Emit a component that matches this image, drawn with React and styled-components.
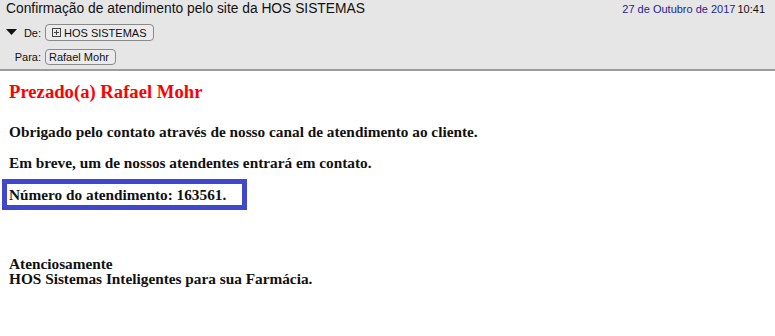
import React from 'react';
import styled, { createGlobalStyle } from 'styled-components';

const GlobalStyle = createGlobalStyle`
  html, body {
    margin: 0;
    padding: 0;
    background: #ffffff;
  }
`;

const Page = styled.div`
  width: 775px;
  height: 336px;
  overflow: hidden;
  background: #ffffff;
`;

const Header = styled.div`
  height: 69px;
  background-color: #e6e6e6;
  border-bottom: 2px solid #9c9c9c;
  font-family: 'Liberation Sans', Arial, sans-serif;
  color: #111;
`;

const TopRow = styled.div`
  display: flex;
  justify-content: space-between;
  align-items: baseline;
  padding: 1px 10px 0 6px;
  height: 20px;
`;

const Subject = styled.div`
  font-size: 13.8px;
`;

const DateLine = styled.div`
  font-size: 11px;
`;

const DateText = styled.span`
  color: #1f1f8f;
  margin-right: 2px;
`;

const FieldRow = styled.div`
  display: flex;
  align-items: center;
  height: 17px;
  margin-top: ${(p) => p.$top || 0}px;
`;

const LabelCell = styled.div`
  width: 45px;
  display: flex;
  align-items: center;
  justify-content: flex-end;
  gap: 7px;
  font-size: 11px;
  padding-right: 4px;
  box-sizing: border-box;
`;

const Pill = styled.span`
  display: inline-flex;
  align-items: center;
  gap: 3px;
  height: ${(p) => p.$h || 17}px;
  box-sizing: border-box;
  padding: 0 6px 0 ${(p) => p.$left || 3}px;
  border: 1px solid #8a8a8a;
  border-radius: 4px;
  background: #ebebeb;
  font-size: 11px;
  color: #111;
`;

const Body = styled.div`
  font-family: 'Liberation Serif', 'Times New Roman', serif;
  font-weight: bold;
  color: #111;
  padding: 0 2px;
`;

const Greeting = styled.div`
  color: #ff0000;
  font-size: 18.67px;
  padding-left: 7px;
  margin-top: 10px;
`;

const Para = styled.div`
  font-size: 15.3px;
  line-height: 17px;
  padding-left: 7px;
  margin-top: ${(p) => p.$top}px;
`;

const TicketBox = styled.div`
  width: 245px;
  box-sizing: border-box;
  border: 5px solid #3f48cc;
  padding: 2px;
  font-size: 15.3px;
  line-height: 17px;
  margin-top: 8px;
`;

const Signature = styled.div`
  font-size: 15.3px;
  line-height: 15px;
  padding-left: 7px;
  margin-top: 46px;
`;

const Arrow = () => (
  <svg width="11" height="7" viewBox="0 0 11 7">
    <polygon points="0,0 11,0 5.5,6" fill="#111" />
  </svg>
);

const PlusBox = () => (
  <svg width="9" height="9" viewBox="0 0 9 9">
    <rect x="0.5" y="0.5" width="8" height="8" fill="none" stroke="#444" />
    <line x1="2" y1="4.5" x2="7" y2="4.5" stroke="#444" />
    <line x1="4.5" y1="2" x2="4.5" y2="7" stroke="#444" />
  </svg>
);

export default function App() {
  return (
    <Page>
      <GlobalStyle />
      <Header>
        <TopRow>
          <Subject>Confirmação de atendimento pelo site da HOS SISTEMAS</Subject>
          <DateLine>
            <DateText>27 de Outubro de 2017</DateText>10:41
          </DateLine>
        </TopRow>
        <FieldRow $top={3}>
          <LabelCell>
            <Arrow />
            <span>De:</span>
          </LabelCell>
          <Pill $left={6}>
            <PlusBox />
            HOS SISTEMAS
          </Pill>
        </FieldRow>
        <FieldRow $top={7}>
          <LabelCell>
            <span>Para:</span>
          </LabelCell>
          <Pill $h={16}>Rafael Mohr</Pill>
        </FieldRow>
      </Header>
      <Body>
        <Greeting>Prezado(a) Rafael Mohr</Greeting>
        <Para $top={20}>Obrigado pelo contato através de nosso canal de atendimento ao cliente.</Para>
        <Para $top={14}>Em breve, um de nossos atendentes entrará em contato.</Para>
        <TicketBox>Número do atendimento: 163561.</TicketBox>
        <Signature>
          Atenciosamente
          <br />
          HOS Sistemas Inteligentes para sua Farmácia.
        </Signature>
      </Body>
    </Page>
  );
}
